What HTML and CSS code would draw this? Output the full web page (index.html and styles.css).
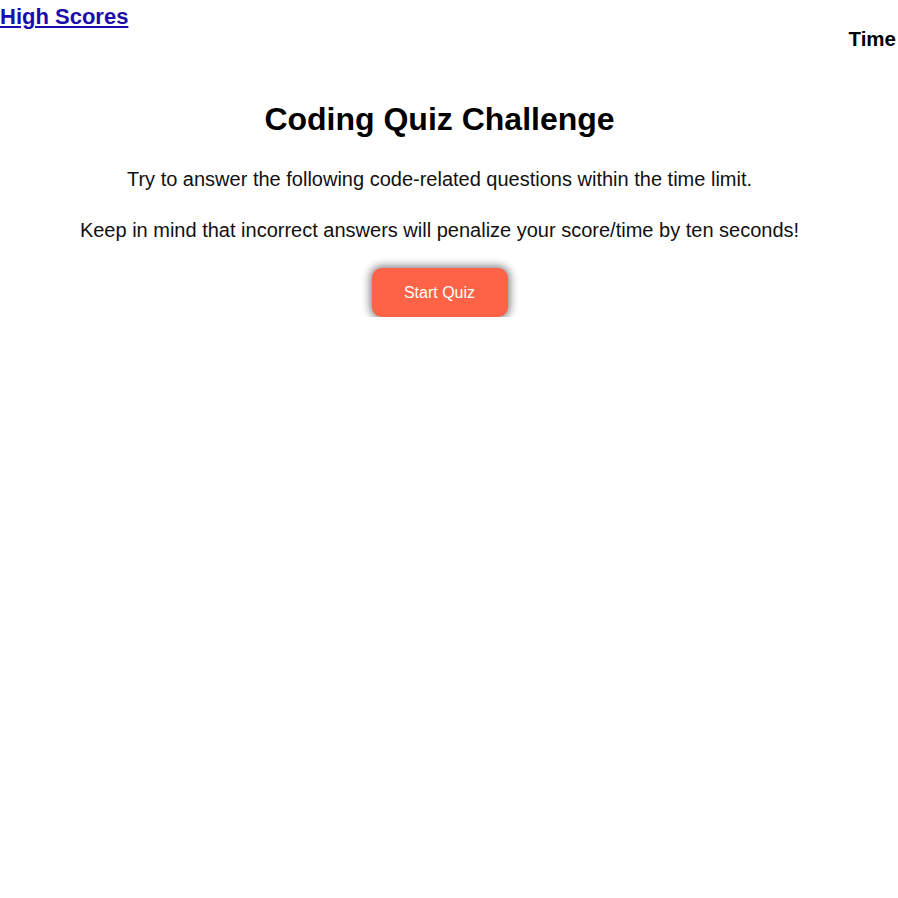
FILE: index.html
```html
<!DOCTYPE html>
<html>
<head>
<meta charset="utf-8">
<link rel="stylesheet" href="styles.css">
</head>
<body>
<header class="top">
  <a class="scores" href="#">High Scores</a>
  <div class="timer">Time</div>
</header>
<main class="intro">
  <h1 class="title">Coding Quiz Challenge</h1>
  <p class="text">Try to answer the following code-related questions within the time limit.</p>
  <p class="text text-last">Keep in mind that incorrect answers will penalize your score/time by ten seconds!</p>
  <button class="start">Start Quiz</button>
</main>
</body>
</html>
```
FILE: styles.css
```css
body {
  margin: 0;
  font-family: "Liberation Sans", Arial, sans-serif;
  background: #fff;
  color: #000;
}
.top {
  display: flex;
  justify-content: space-between;
  align-items: flex-start;
}
.scores {
  font-size: 22px;
  font-weight: bold;
  color: #1a0dab;
  line-height: 34px;
}
.timer {
  font-size: 20.5px;
  font-weight: bold;
  padding-top: 27px;
  padding-right: 2px;
}
.intro {
  display: flex;
  flex-direction: column;
  align-items: center;
  text-align: center;
  margin-right: 19px;
}
.title {
  font-size: 32px;
  margin: 50px 0 30px;
}
.text {
  font-size: 20px;
  margin: 0 0 28px;
  color: #111;
}
.text-last {
  margin-bottom: 26px;
}
.start {
  width: 136px;
  height: 49px;
  border: none;
  border-radius: 10px;
  background: #ff6347;
  color: #fff;
  font-family: "Liberation Sans", Arial, sans-serif;
  font-size: 16px;
  box-shadow: 0 0 9px 2px rgba(0,0,0,0.5);
}
```
